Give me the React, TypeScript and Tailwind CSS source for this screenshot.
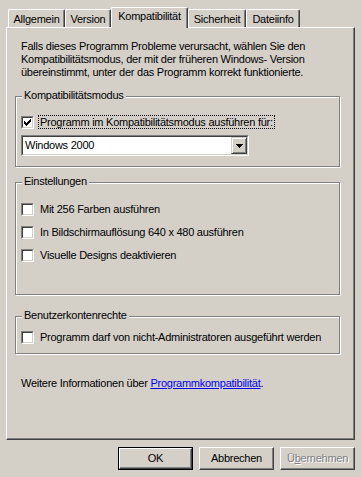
import React from "react";

const CHECK_PIXELS: [number, number][] = [
  [6, 0], [5, 1], [6, 1], [0, 2], [4, 2], [5, 2], [6, 2],
  [0, 3], [1, 3], [3, 3], [4, 3], [5, 3],
  [0, 4], [1, 4], [2, 4], [3, 4], [4, 4],
  [1, 5], [2, 5], [3, 5], [2, 6],
];

function Check({ checked }: { checked?: boolean }) {
  return (
    <div className="w-[13px] h-[13px] shrink-0 border border-t-[#808080] border-l-[#808080] border-r-white border-b-white">
      <div className="w-full h-full border border-t-[#404040] border-l-[#404040] border-r-[#d4d0c8] border-b-[#d4d0c8] bg-white flex items-center justify-center">
        {checked && (
          <svg width="7" height="7" viewBox="0 0 7 7" shapeRendering="crispEdges">
            {CHECK_PIXELS.map(([x, y]) => (
              <rect key={`${x}-${y}`} x={x} y={y} width="1" height="1" fill="#000" />
            ))}
          </svg>
        )}
      </div>
    </div>
  );
}

function CheckRow({ label, checked, focused }: { label: string; checked?: boolean; focused?: boolean }) {
  return (
    <div className="flex items-center h-[14px]">
      <Check checked={checked} />
      <span
        className={
          focused
            ? "ml-[4px] px-[1px] h-[14px] flex items-center border border-dotted border-black whitespace-nowrap"
            : "ml-[4px] px-[1px] h-[14px] flex items-center border border-transparent whitespace-nowrap"
        }
      >
        {label}
      </span>
    </div>
  );
}

function Group({ title, className, children }: { title: string; className: string; children: React.ReactNode }) {
  return (
    <div className={className}>
      <span className="absolute left-[6px] top-[-8px] px-[2px] bg-[#d4d0c8] leading-[13px]">{title}</span>
      {children}
    </div>
  );
}

function Button({ children, isDefault, disabled }: { children: React.ReactNode; isDefault?: boolean; disabled?: boolean }) {
  const inner = (
    <div className="w-full h-full border border-t-white border-l-white border-r-[#404040] border-b-[#404040] shadow-[inset_-1px_-1px_0_#808080] flex items-center justify-center">
      {children}
    </div>
  );
  return isDefault ? (
    <div className="w-[75px] h-[23px] border border-black">{inner}</div>
  ) : (
    <div className={disabled ? "w-[75px] h-[23px] text-[#808080] [text-shadow:1px_1px_0_#fff]" : "w-[75px] h-[23px]"}>{inner}</div>
  );
}

export default function App() {
  return (
    <div className="w-[361px] h-[477px] bg-[#d4d0c8] flex flex-col pt-[7px] text-[11px] leading-[13px] tracking-[-0.25px] text-black overflow-hidden font-['Liberation_Sans',Arial,sans-serif]">
      {/* Tabs */}
      <div className="flex items-end h-[20px] pl-[8px]">
        <div className="w-[57px] h-[18px] border-l border-t border-r border-l-white border-t-white border-r-[#404040] shadow-[inset_-1px_0_0_#808080] rounded-tl-[2px] rounded-tr-[2px] flex justify-center pt-[3px]">
          Allgemein
        </div>
        <div className="w-[46px] h-[18px] border-l border-t border-r border-l-white border-t-white border-r-[#404040] shadow-[inset_-1px_0_0_#808080] rounded-tl-[2px] rounded-tr-[2px] flex justify-center pt-[3px]">
          Version
        </div>
        <div className="relative z-10 -mb-px w-[77px] h-[21px] bg-[#d4d0c8] border-l border-t border-r border-l-white border-t-white border-r-[#404040] shadow-[inset_-1px_0_0_#808080] rounded-tl-[2px] rounded-tr-[2px] flex justify-center pt-[2px]">
          Kompatibilität
        </div>
        <div className="w-[58px] h-[18px] border-l border-t border-r border-l-white border-t-white border-r-[#404040] shadow-[inset_-1px_0_0_#808080] rounded-tl-[2px] rounded-tr-[2px] flex justify-center pt-[3px]">
          Sicherheit
        </div>
        <div className="w-[54px] h-[18px] border-l border-t border-r border-l-white border-t-white border-r-[#404040] shadow-[inset_-1px_0_0_#808080] rounded-tl-[2px] rounded-tr-[2px] flex justify-center pt-[3px]">
          Dateiinfo
        </div>
      </div>

      {/* Panel */}
      <div className="ml-[6px] w-[349px] h-[413px] border border-t-white border-l-white border-r-[#404040] border-b-[#404040] shadow-[inset_-1px_-1px_0_#808080] flex flex-col pl-[8px]">
        <p className="mt-[12px] ml-[6px] whitespace-nowrap">
          Falls dieses Programm Probleme verursacht, wählen Sie den
          <br />
          Kompatibilitätsmodus, der mit der früheren Windows- Version
          <br />
          übereinstimmt, unter der das Programm korrekt funktionierte.
        </p>

        <Group
          title="Kompatibilitätsmodus"
          className="relative mt-[17px] w-[325px] h-[71px] border border-[#808080] shadow-[1px_1px_0_#fff,inset_1px_1px_0_#fff] pt-[18px] pl-[5px] flex flex-col"
        >
          <CheckRow label="Programm im Kompatibilitätsmodus ausführen für:" checked focused />
          <div className="mt-[6px] w-[228px] h-[21px] border border-t-[#808080] border-l-[#808080] border-r-white border-b-white">
            <div className="w-full h-full border border-t-[#404040] border-l-[#404040] border-r-[#d4d0c8] border-b-[#d4d0c8] bg-white flex items-center">
              <span className="flex-1 pl-[2px]">Windows 2000</span>
              <div className="w-[16px] h-[17px] bg-[#d4d0c8] border border-t-[#d4d0c8] border-l-[#d4d0c8] border-r-[#404040] border-b-[#404040] shadow-[inset_1px_1px_0_#fff,inset_-1px_-1px_0_#808080] flex items-center justify-center">
                <svg width="7" height="4" viewBox="0 0 7 4" shapeRendering="crispEdges">
                  <path d="M0 0h7v1H0zM1 1h5v1H1zM2 2h3v1H2zM3 3h1v1H3z" fill="#000" />
                </svg>
              </div>
            </div>
          </div>
        </Group>

        <Group
          title="Einstellungen"
          className="relative mt-[15px] w-[325px] h-[113px] border border-[#808080] shadow-[1px_1px_0_#fff,inset_1px_1px_0_#fff] pt-[19px] pl-[5px] flex flex-col gap-[9px]"
        >
          <CheckRow label="Mit 256 Farben ausführen" />
          <CheckRow label="In Bildschirmauflösung 640 x 480 ausführen" />
          <CheckRow label="Visuelle Designs deaktivieren" />
        </Group>

        <Group
          title="Benutzerkontenrechte"
          className="relative mt-[21px] w-[325px] h-[38px] border border-[#808080] shadow-[1px_1px_0_#fff,inset_1px_1px_0_#fff] pt-[13px] pl-[5px] flex flex-col"
        >
          <CheckRow label="Programm darf von nicht-Administratoren ausgeführt werden" />
        </Group>

        <p className="mt-[23px] ml-[6px] whitespace-nowrap">
          Weitere Informationen über <span className="text-[#0000ff] underline">Programmkompatibilität</span>.
        </p>
      </div>

      {/* Buttons */}
      <div className="mt-[7px] flex justify-end gap-[6px] pr-[6px]">
        <Button isDefault>OK</Button>
        <Button>Abbrechen</Button>
        <Button disabled>
          <span>
            Ü<span className="underline">b</span>ernehmen
          </span>
        </Button>
      </div>
    </div>
  );
}
